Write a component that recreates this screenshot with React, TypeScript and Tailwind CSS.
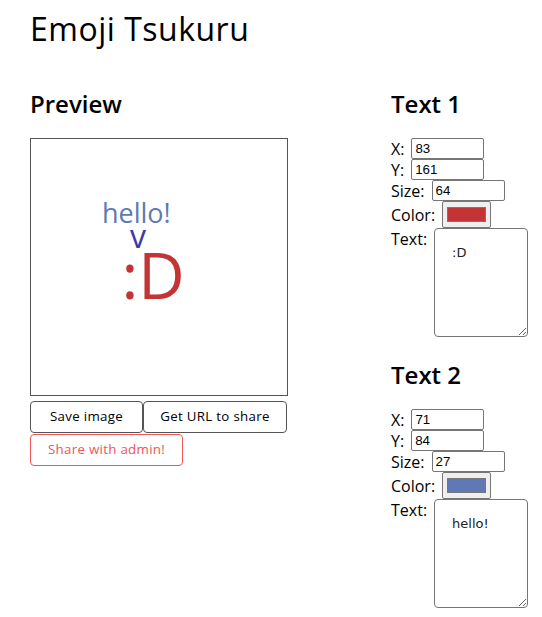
import { useState } from 'react';

type TextItem = { x: number; y: number; size: number; color: string; text: string };

function Field({ label, children }: { label: string; children: React.ReactNode }) {
  return (
    <div className="flex items-center gap-[7px]">
      <span className="text-[16px] leading-none">{label}</span>
      {children}
    </div>
  );
}

function TextPanel({ title, item }: { title: string; item: TextItem }) {
  const inputClass =
    "h-[21px] w-[73px] rounded-[2px] border border-[#767676] px-[3px] text-[13.3px] text-black font-['Liberation_Sans',sans-serif] outline-none";
  return (
    <section>
      <h2 className="mb-[20px] text-[24px] font-semibold leading-[28px]">{title}</h2>
      <div className="flex flex-col">
        <Field label="X:">
          <input className={inputClass} defaultValue={item.x} />
        </Field>
        <Field label="Y:">
          <input className={inputClass} defaultValue={item.y} />
        </Field>
        <Field label="Size:">
          <input className={inputClass} defaultValue={item.size} />
        </Field>
        <Field label="Color:">
          <div className="flex h-[27px] w-[49px] items-center justify-center rounded-[2px] border border-[#767676] bg-[#efefef]">
            <div className="h-[15px] w-[39px] border border-[#777]" style={{ background: item.color }} />
          </div>
        </Field>
        <div className="flex items-start gap-[7px]">
          <span className="pt-[3px] text-[16px] leading-none">Text:</span>
          <textarea
            className="h-[109px] w-[94px] resize rounded-[4px] border border-[#767676] px-[17px] py-[17px] text-[13px] leading-none text-[#222] font-['DejaVu_Sans',sans-serif] outline-none"
            defaultValue={item.text}
          />
        </div>
      </div>
    </section>
  );
}

export default function App() {
  const [texts] = useState<TextItem[]>([
    { x: 83, y: 161, size: 64, color: '#c43434', text: ':D' },
    { x: 71, y: 84, size: 27, color: '#5e79b5', text: 'hello!' },
  ]);

  return (
    <div className="min-h-screen bg-white px-[30px] font-['Open_Sans',sans-serif] text-black">
      <h1 className="pt-[9px] text-[32px] font-normal leading-[40px] tracking-[0.5px]">Emoji Tsukuru</h1>
      <div className="mt-[41px] flex gap-[103px]">
        <div className="w-[258px]">
          <h2 className="mb-[20px] text-[24px] font-semibold leading-[28px]">Preview</h2>
          <div className="relative h-[258px] w-[258px] overflow-hidden border border-[#555]">
            {texts.map((t, i) => (
              <span
                key={i}
                className="absolute whitespace-pre leading-none"
                style={{
                  left: t.x + (t.size - 27) * 0.2,
                  top: t.y - t.size * 0.908 + 1,
                  fontSize: t.size,
                  color: t.color,
                }}
              >
                {t.text}
              </span>
            ))}
            <span className="absolute left-[99px] top-[90px] text-[32px] leading-[14px] text-[#3a3aa8]">v</span>
          </div>
          <div className="mt-[5px] flex flex-wrap gap-y-[1px] text-[13.3px] tracking-[0.3px]">
            <button className="h-[32px] w-[113px] rounded-[4px] border border-[#555] bg-white">Save image</button>
            <button className="h-[32px] w-[144px] rounded-[4px] border border-[#555] bg-white">Get URL to share</button>
            <button className="h-[32px] w-[153px] rounded-[4px] border border-[#e55] bg-white text-[#e55]">
              Share with admin!
            </button>
          </div>
        </div>
        <div className="flex w-[140px] flex-col gap-[24px]">
          {texts.map((t, i) => (
            <TextPanel key={i} title={`Text ${i + 1}`} item={t} />
          ))}
        </div>
      </div>
    </div>
  );
}
